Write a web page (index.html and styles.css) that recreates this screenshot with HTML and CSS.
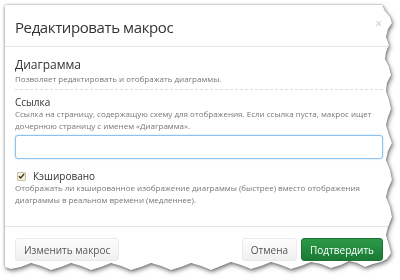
FILE: index.html
```html
<!DOCTYPE html>
<html lang="ru">
<head>
  <meta charset="UTF-8" />
  <title>Редактировать макрос</title>
  <link rel="stylesheet" href="styles.css">
</head>
<body>

  <div class="shadow">
    <div class="dialog">
      <!-- Header -->
      <div class="dialog-header">
        <h1>Редактировать макрос</h1>
        <span class="close">&times;</span>
      </div>

      <!-- Body -->
      <div class="dialog-body">
        <div class="macro-info">
          <div class="macro-name">Диаграмма</div>
          <div class="hint">Позволяет редактировать и отображать диаграммы.</div>
        </div>

        <div class="field">
          <label class="field-label">Ссылка</label>
          <div class="hint">Ссылка на страницу, содержащую схему для отображения. Если ссылка пуста, макрос ищет дочернюю страницу с именем «Диаграмма».</div>
          <input type="text" class="field-input" />
        </div>

        <div class="field">
          <label class="check">
            <span class="check-box">
              <svg width="8" height="8" viewBox="0 0 8 8"><path d="M1 4.2 L3.1 6.3 L7 1.6" fill="none" stroke="#3b3418" stroke-width="1.6"/></svg>
            </span>
            Кэшировано
          </label>
          <div class="hint">Отображать ли кэшированное изображение диаграммы (быстрее) вместо отображения диаграммы в реальном времени (медленнее).</div>
        </div>
      </div>

      <!-- Footer -->
      <div class="dialog-footer">
        <button class="btn">Изменить макрос</button>
        <div class="footer-right">
          <button class="btn">Отмена</button>
          <button class="btn btn-primary">Подтвердить</button>
        </div>
      </div>
    </div>
  </div>

</body>
</html>
```

FILE: styles.css
```css
* {
  margin: 0;
  padding: 0;
  box-sizing: border-box;
}

body {
  font-family: "Open Sans", Arial, sans-serif;
  background-color: #fff;
  color: #333;
  width: 400px;
  height: 280px;
  overflow: hidden;
}

.shadow {
  padding: 5px 0 0 5px;
  filter: drop-shadow(0 0 1px rgba(0, 0, 0, 0.35)) drop-shadow(1px 2px 2px rgba(0, 0, 0, 0.5));
}

.dialog {
  width: 388px;
  height: 266px;
  background-color: #fff;
  display: flex;
  flex-direction: column;
  clip-path: polygon(0 0, 377px 0, 380px 6px, 385px 12px, 387px 18px, 383px 24px, 381px 32px,
    384px 40px, 381px 47px, 380px 54px, 384px 62px, 386px 70px, 382px 78px, 381px 86px,
    384px 95px, 386px 104px, 383px 112px, 381px 120px, 384px 130px, 387px 138px,
    383px 146px, 381px 155px, 385px 165px, 387px 175px, 383px 184px, 381px 192px,
    385px 202px, 387px 212px, 383px 222px, 381px 230px, 384px 240px, 386px 248px,
    382px 254px, 376px 257px, 368px 259px, 360px 262px, 352px 258px, 344px 256px,
    336px 260px, 326px 263px, 316px 259px, 306px 257px, 296px 261px, 286px 264px,
    276px 260px, 266px 257px, 256px 261px, 246px 264px, 236px 260px, 226px 257px,
    216px 261px, 206px 265px, 196px 261px, 186px 258px, 176px 262px, 166px 265px,
    156px 261px, 146px 258px, 136px 262px, 126px 265px, 116px 261px, 106px 258px,
    96px 262px, 86px 265px, 76px 261px, 66px 258px, 56px 262px, 46px 265px,
    36px 261px, 26px 258px, 16px 262px, 6px 264px, 0 262px);
}

.dialog-header {
  height: 42px;
  padding: 2px 10px 0;
  border-bottom: 1px solid #e5e5e5;
  display: flex;
  align-items: center;
  justify-content: space-between;
}

.dialog-header h1 {
  font-size: 15px;
  font-weight: normal;
  letter-spacing: -0.4px;
  color: #333;
}

.close {
  font-size: 12px;
  color: #c4c4c4;
  margin-right: 1px;
  margin-top: -7px;
}

.dialog-body {
  height: 180px;
  padding: 10px 10px 0;
  border-bottom: 1px solid #e5e5e5;
}

.macro-info {
  padding-bottom: 4px;
  border-bottom: 1px dashed #ddd;
}

.macro-name {
  font-size: 12px;
  line-height: 16px;
}

.hint {
  font-size: 8px;
  line-height: 12px;
  color: #777;
}

.field {
  margin-top: 6px;
}

.field-label {
  display: block;
  font-size: 10px;
  line-height: 12px;
}

.field-input {
  display: block;
  width: 100%;
  height: 24px;
  margin-top: 3px;
  margin-bottom: 11px;
  border: 1px solid #8ec2ee;
  border-radius: 3px;
  box-shadow: 0 0 2px rgba(102, 175, 233, 0.5);
  outline: none;
}

.check {
  display: flex;
  align-items: center;
  gap: 7px;
  font-size: 10px;
  line-height: 12px;
  padding-left: 2px;
}

.check-box {
  width: 9px;
  height: 9px;
  border: 1px solid #c9c0a0;
  border-radius: 1px;
  background-color: #f3f0e4;
  display: flex;
  align-items: center;
  justify-content: center;
}

.dialog-footer {
  flex: 1;
  padding: 11px 10px 0;
  display: flex;
  justify-content: space-between;
  align-items: flex-start;
}

.footer-right {
  display: flex;
  gap: 4px;
}

.btn {
  font-family: "Open Sans", Arial, sans-serif;
  font-size: 10px;
  height: 23px;
  padding: 0 8px;
  color: #555;
  background: linear-gradient(#fdfdfd, #f0f0f0);
  border: 1px solid #eaeaea;
  border-radius: 3px;
}

.btn-primary {
  color: #fff;
  background: linear-gradient(#2c9a47, #1b7a35);
  border-color: #1b7233;
}
```
